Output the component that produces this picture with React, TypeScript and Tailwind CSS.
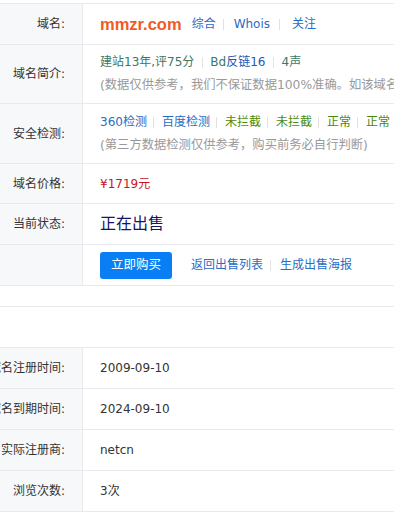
const font = { fontFamily: '"DejaVu Sans", "Noto Sans CJK SC", sans-serif' }

type RowProps = {
  label?: string
  children?: React.ReactNode
  h: string
}

function Row({ label, children, h }: RowProps) {
  return (
    <div className={`flex border-b border-[#e8eaed] ${h}`}>
      <div className="w-[83px] shrink-0 flex items-center justify-end pr-[17px] bg-[#f6f8fa] border-r border-[#e8eaed] text-[12px] text-[#333] whitespace-nowrap">
        {label}
      </div>
      <div className="flex-1 flex flex-col justify-center pl-[17px] text-[12px] whitespace-nowrap overflow-hidden">
        {children}
      </div>
    </div>
  )
}

function Sep({ className = "ml-[6px] mr-[8px]" }: { className?: string }) {
  return <span className={`inline-block w-px h-[11px] bg-[#e2e2e2] shrink-0 ${className}`} />
}

export default function App() {
  return (
    <div className="w-[394px] h-[513px] bg-white overflow-hidden pt-[3px]" style={font}>
      <div className="border-t border-[#e8eaed]">
        <Row label="域名:" h="h-[41px]">
          <div className="flex items-center">
            <span className="text-[16.5px] font-bold text-[#f15a24] mr-[10px]" style={{ fontFamily: '"Liberation Sans", Arial, sans-serif' }}>mmzr.com</span>
            <span className="text-[#2a6cc4]">综合</span>
            <Sep className="ml-[7px] mr-[10px]" />
            <span className="text-[#2a6cc4]">Whois</span>
            <Sep className="ml-[9px] mr-[12px]" />
            <span className="text-[#2a6cc4]">关注</span>
          </div>
        </Row>
        <Row label="域名简介:" h="h-[59px]">
          <div className="flex items-center leading-[23px]">
            <span className="text-[#3a7868]">建站13年,评75分</span>
            <Sep className="ml-[8px] mr-[7px]" />
            <span className="text-[#3a7868]">Bd</span>
            <span className="text-[#2456b8]">反链16</span>
            <Sep className="ml-[7px] mr-[8px]" />
            <span className="text-[#3a7868]">4声</span>
          </div>
          <div className="leading-[23px] text-[12.3px] text-[#999]">(数据仅供参考，我们不保证数据100%准确。如该域名有疑问请联系</div>
        </Row>
        <Row label="安全检测:" h="h-[60px]">
          <div className="flex items-center leading-[23px]">
            <span className="text-[#2a6cc4]">360检测</span>
            <Sep />
            <span className="text-[#2a6cc4]">百度检测</span>
            <Sep />
            <span className="text-[#4a8a0a]">未拦截</span>
            <Sep />
            <span className="text-[#4a8a0a]">未拦截</span>
            <Sep />
            <span className="text-[#4a8a0a]">正常</span>
            <Sep />
            <span className="text-[#4a8a0a]">正常</span>
          </div>
          <div className="leading-[23px] text-[12.3px] text-[#999]">(第三方数据检测仅供参考，购买前务必自行判断)</div>
        </Row>
        <Row label="域名价格:" h="h-[40px]">
          <span className="text-[#c8161d]">¥1719元</span>
        </Row>
        <Row label="当前状态:" h="h-[41px]">
          <span className="text-[16px] text-[#161668]">正在出售</span>
        </Row>
        <Row h="h-[41px]">
          <div className="flex items-center">
            <button className="w-[72px] h-[27px] rounded-[3px] bg-[#0a7ff5] text-white text-[12.5px] mr-[19px]">立即购买</button>
            <span className="text-[#2a6cc4]">返回出售列表</span>
            <Sep className="ml-[7px] mr-[9px]" />
            <span className="text-[#2a6cc4]">生成出售海报</span>
          </div>
        </Row>
        <div className="h-[21px] border-b border-[#e8eaed]" />
        <div className="h-[41px] border-b border-[#e8eaed]" />
        <Row label="域名注册时间:" h="h-[41px]">
          <span className="text-[#333]">2009-09-10</span>
        </Row>
        <Row label="域名到期时间:" h="h-[41px]">
          <span className="text-[#333]">2024-09-10</span>
        </Row>
        <Row label="实际注册商:" h="h-[41px]">
          <span className="text-[#333]">netcn</span>
        </Row>
        <Row label="浏览次数:" h="h-[41px]">
          <span className="text-[#333]">3次</span>
        </Row>
      </div>
    </div>
  )
}
